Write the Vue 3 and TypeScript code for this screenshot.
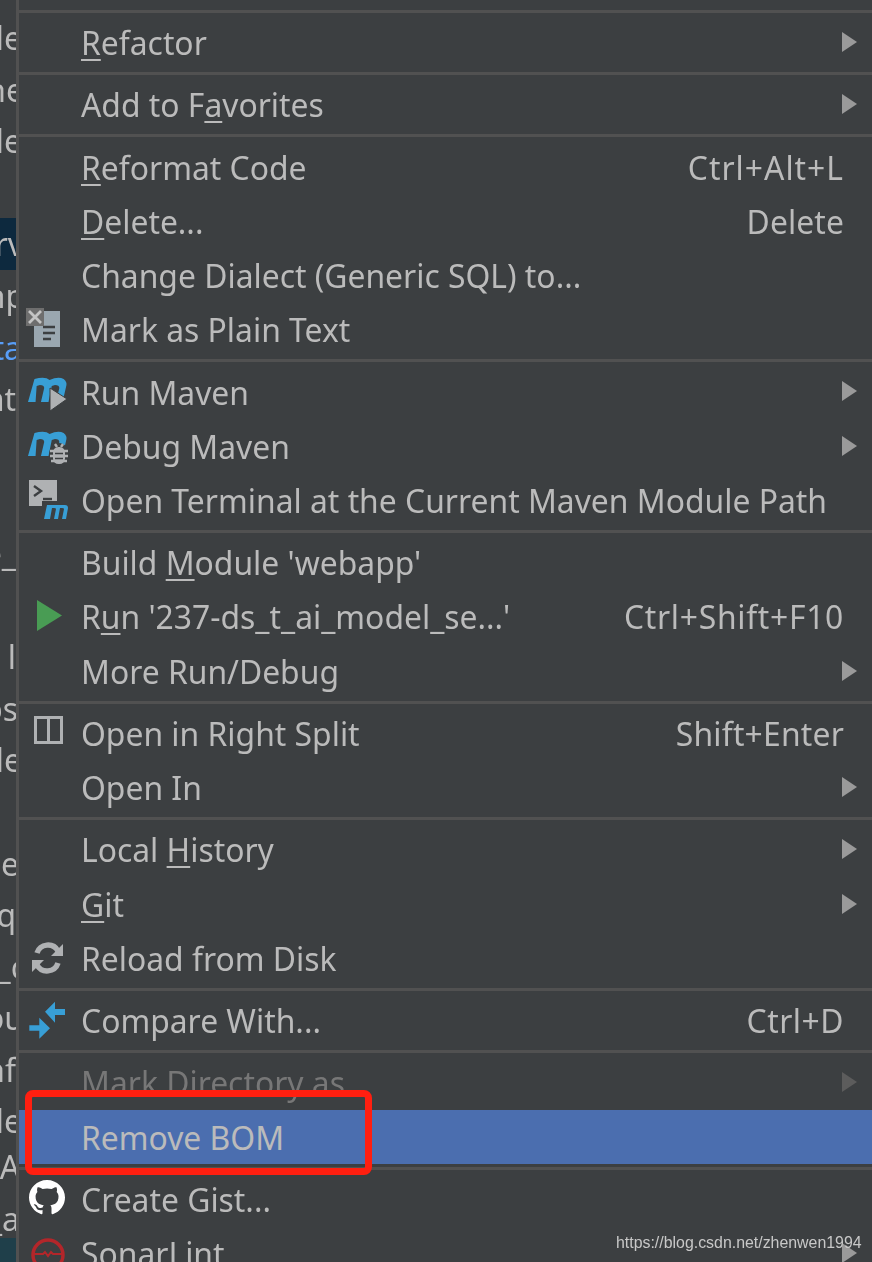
<script setup lang="ts">
interface Item { label: string; key?: string; ks?: number; arrow?: boolean; icon?: string; disabled?: boolean; active?: boolean }
const groups: Item[][] = [
  [{ label: '&Refactor', arrow: true }],
  [{ label: 'Add to F&avorites', arrow: true }],
  [
    { label: '&Reformat Code', key: 'Ctrl+Alt+L', ks: 1 },
    { label: '&Delete...', key: 'Delete', ks: 0.1 },
    { label: 'Change Dialect (Generic SQL) to...' },
    { label: 'Mark as Plain Text', icon: 'plain' },
  ],
  [
    { label: 'Run Maven', arrow: true, icon: 'mrun' },
    { label: 'Debug Maven', arrow: true, icon: 'mdebug' },
    { label: 'Open Terminal at the Current Maven Module Path', icon: 'mterm' },
  ],
  [
    { label: "Build &Module 'webapp'" },
    { label: "R&un '237-ds_t_ai_model_se...'", key: 'Ctrl+Shift+F10', ks: 0.7, icon: 'play' },
    { label: 'More Run/Debug', arrow: true },
  ],
  [
    { label: 'Open in Right Split', key: 'Shift+Enter', ks: 0.2, icon: 'split' },
    { label: 'Open In', arrow: true },
  ],
  [
    { label: 'Local &History', arrow: true },
    { label: '&Git', arrow: true },
    { label: 'Reload from Disk', icon: 'reload' },
  ],
  [{ label: 'Compare With...', key: 'Ctrl+D', ks: 0.5, icon: 'compare' }],
  [
    { label: 'Mark Directory as', arrow: true, disabled: true },
    { label: 'Remove BOM', active: true },
  ],
  [
    { label: 'Create Gist...', icon: 'github' },
    { label: 'SonarLint', arrow: true, icon: 'sonar' },
  ],
]
function parts(label: string): [string, string, string] {
  const i = label.indexOf('&')
  if (i < 0) return [label, '', '']
  return [label.slice(0, i), label[i + 1], label.slice(i + 2)]
}
interface Node { t: string; off?: number; sel?: boolean; blue?: boolean; up?: number }
const tree: Node[] = [
  { t: 'le', off: 6 }, { t: 'ne', off: 8 }, { t: 'le', off: 6 }, { t: '' },
  { t: 'rv', sel: true, off: 8 }, { t: 'np', off: 9 }, { t: 'ta', blue: true, off: 6 }, { t: 'at', off: 0 },
  { t: '' }, { t: '' }, { t: 'e_', off: 0 }, { t: '' }, { t: 'l', off: 0 }, { t: 'os', off: 2 }, { t: 'le', off: 6 }, { t: '' },
  { t: 'ce', off: 3 }, { t: 'q', off: 0 }, { t: '_c', off: 10 }, { t: 'ou', off: 8 }, { t: 'nf', off: 0 }, { t: 'le', off: 6 }, { t: 'A', off: 4, up: 6 }, { t: '_a', off: 4 },
]
const mPath = 'M0 25 L6 2 Q16 -1 20 3 Q28 -1 33 2 Q37 5 35 11 L32 25 L26 25 L29 11 Q29 8 25 8 L22 9 L19 25 L12 25 L15 11 Q15 8 11 8 L8 9 L7 25 Z'
</script>

<template>
  <div class="page">
    <div class="tree">
      <div
        v-for="(r, i) in tree"
        :key="i"
        class="node"
        :class="{ sel: r.sel, blue: r.blue }"
        :style="{ marginTop: `${-(r.up ?? 0)}px` }"
      ><span :style="{ marginRight: `${-(r.off ?? 0)}px` }">{{ r.t }}</span></div>
      <div class="node teal"></div>
    </div>
    <div class="menu">
      <template v-for="(g, gi) in groups" :key="gi">
        <div class="sep"></div>
        <div
          v-for="it in g"
          :key="it.label"
          class="row"
          :class="{ disabled: it.disabled, active: it.active }"
        >
          <div class="ico">
            <svg v-if="it.icon" width="62" height="54" viewBox="0 0 62 54">
              <g v-if="it.icon === 'plain'">
                <rect x="15" y="8" width="26" height="36" fill="#9aa7b0" />
                <path d="M24 24h12M24 30h12M24 36h8" stroke="#3c3f41" stroke-width="2.400" fill="none" />
                <rect x="7" y="5" width="18" height="18" fill="#6e6e6e" />
                <path d="M10 8l12 12M22 8L10 20" stroke="#c4c4c4" stroke-width="2.800" fill="none" />
              </g>
              <g v-else-if="it.icon === 'mrun'">
                <path :d="mPath" transform="translate(9 12) scale(1.080 1)" fill="#389fd6" />
                <path d="M31 23l17 11-17 12z" fill="#afb1b3" stroke="#3c3f41" stroke-width="1" />
              </g>
              <g v-else-if="it.icon === 'mdebug'">
                <path :d="mPath" transform="translate(9 12) scale(1.080 1)" fill="#389fd6" />
                <ellipse cx="40" cy="36" rx="10" ry="12" fill="#3c3f41" />
                <rect x="34" y="28" width="12" height="17" rx="5.500" fill="#afb1b3" />
                <path d="M31 32h18M31 37h18M32 42h16M36 25l2 3M44 25l-2 3" stroke="#afb1b3" stroke-width="2.400" fill="none" />
                <path d="M36 34.500h8M36 39.500h8" stroke="#3c3f41" stroke-width="1.500" fill="none" />
              </g>
              <g v-else-if="it.icon === 'mterm'">
                <rect x="10" y="7" width="28" height="26" fill="#afb1b3" />
                <path d="M15 13l7 5-7 5" stroke="#3c3f41" stroke-width="2.400" fill="none" />
                <path d="M24 26h9" stroke="#3c3f41" stroke-width="2.400" fill="none" />
                <rect x="23" y="28" width="27" height="19" fill="#3c3f41" />
                <path d="M25 46l3-14h18q3 0 3 3l-2 11h-4l2-10q0-1-2-1h-2l-2 11h-4l2-10q0-1-2-1h-2l-2 11z" fill="#389fd6" />
              </g>
              <path v-else-if="it.icon === 'play'" d="M18 10l25 15.500L18 41z" fill="#499c54" />
              <path v-else-if="it.icon === 'split'" d="M16.500 11.500h26v25h-26zM29.500 11.500v25" fill="none" stroke="#afb1b3" stroke-width="3" />
              <g v-else-if="it.icon === 'reload'" fill="none" stroke="#afb1b3" stroke-width="5.500">
                <path d="M18 22a11.500 11.500 0 0 1 21-2" />
                <path d="M39 32a11.500 11.500 0 0 1-21 2" />
                <path d="M44 13v12H32z" fill="#afb1b3" stroke="none" />
                <path d="M13 41V29h12z" fill="#afb1b3" stroke="none" />
              </g>
              <g v-else-if="it.icon === 'compare'" fill="#389fd6">
                <path d="M26 17.700L36 7.700V15H46V21H36V28.700Z" />
                <path d="M31 34.300L20.300 23.700V31.300H10.300V36.700H20.300V44.700Z" />
              </g>
              <path v-else-if="it.icon === 'github'" transform="translate(10 8) scale(2.250 2.190)" fill="#fff" fill-rule="evenodd" d="M8 0C3.580 0 0 3.580 0 8c0 3.540 2.290 6.530 5.470 7.590.4.070.55-.17.55-.38 0-.19-.01-.82-.01-1.490-2.010.37-2.530-.49-2.690-.94-.09-.23-.48-.94-.82-1.130-.28-.15-.68-.52-.01-.53.63-.01 1.080.58 1.230.82.720 1.210 1.870.87 2.330.66.070-.52.280-.87.510-1.070-1.780-.2-3.640-.89-3.640-3.950 0-.87.310-1.590.820-2.150-.08-.2-.36-1.020.08-2.120 0 0 .67-.21 2.200.82.640-.18 1.320-.27 2-.27s1.360.09 2 .27c1.530-1.040 2.200-.82 2.200-.82.440 1.100.16 1.920.08 2.120.51.560.82 1.270.82 2.150 0 3.070-1.870 3.750-3.650 3.950.29.250.54.730.54 1.480 0 1.070-.01 1.930-.01 2.200 0 .21.150.46.550.38A8.013 8.013 0 0 0 16 8c0-4.420-3.580-8-8-8z" />
              <g v-else-if="it.icon === 'sonar'" fill="none" stroke="#b3262a" stroke-width="3.500">
                <circle cx="29" cy="28" r="15" />
                <path d="M15 27h9l2-2 3 4 3-4 2 2h10" stroke-width="2" />
              </g>
            </svg>
          </div>
          <div class="label">{{ parts(it.label)[0] }}<span class="mn">{{ parts(it.label)[1] }}</span>{{ parts(it.label)[2] }}</div>
          <div v-if="it.key" class="key" :style="{ letterSpacing: `${it.ks ?? 0}px` }">{{ it.key }}</div>
          <div v-if="it.arrow" class="arrow"></div>
        </div>
      </template>
    </div>
    <div class="callout"></div>
    <div class="mark">https://blog.csdn.net/zhenwen1994</div>
  </div>
</template>

<style>
html, body { margin: 0; background: #3c3f41; }
</style>

<style scoped>
.page {
  position: relative;
  width: 872px;
  height: 1262px;
  overflow: hidden;
  display: flex;
  background: #3c3f41;
  font-family: "Noto Sans", "Open Sans", sans-serif;
  color: #bbbbbb;
}
.tree {
  width: 16px;
  flex: none;
  padding-top: 12px;
  font-size: 31.850px;
  line-height: 51.600px;
  filter: blur(0.4px);
}
.node {
  height: 51.600px;
  width: 16px;
  overflow: hidden;
  display: flex;
  justify-content: flex-end;
  white-space: nowrap;
}
.node span { flex: none; }
.node.sel { background: #0d293e; }
.node.blue { color: #589df6; }
.node.teal { background: #1f3f4a; margin-top: -6px; }
.menu {
  flex: 1;
  min-width: 0;
  border-left: 3px solid #515151;
  padding-top: 7.500px;
  filter: blur(0.4px);
}
.sep {
  height: 8px;
  display: flex;
  align-items: center;
}
.sep::before {
  content: "";
  flex: 1;
  height: 3px;
  background: #515151;
}
.row {
  height: 54.240px;
  display: flex;
  align-items: center;
  font-size: 31.850px;
  white-space: nowrap;
  position: relative;
}
.ico { width: 62px; height: 54px; flex: none; }
.ico svg { display: block; overflow: visible; }
.label { flex: 1; }
.mn { text-decoration: underline; text-decoration-thickness: 2px; text-underline-offset: 4px; }
.key { margin-right: 28px; }
.arrow {
  position: absolute;
  left: 823px;
  top: 16.500px;
  width: 0;
  height: 0;
  border-left: 15px solid #9a9a9a;
  border-top: 10px solid transparent;
  border-bottom: 10px solid transparent;
}
.disabled { color: #777777; }
.disabled .arrow { border-left-color: #5c5c5c; }
.active { background: #4b6eaf; }
.callout {
  position: absolute;
  left: 25px;
  top: 1090px;
  width: 347px;
  height: 85px;
  box-sizing: border-box;
  border: 7.500px solid #ff1f10;
  border-radius: 8px;
}
.mark {
  position: absolute;
  left: 616px;
  top: 1233px;
  font-family: "Liberation Sans", Arial, sans-serif;
  font-size: 15.900px;
  line-height: 20px;
  color: #c8c8c8;
}
</style>
